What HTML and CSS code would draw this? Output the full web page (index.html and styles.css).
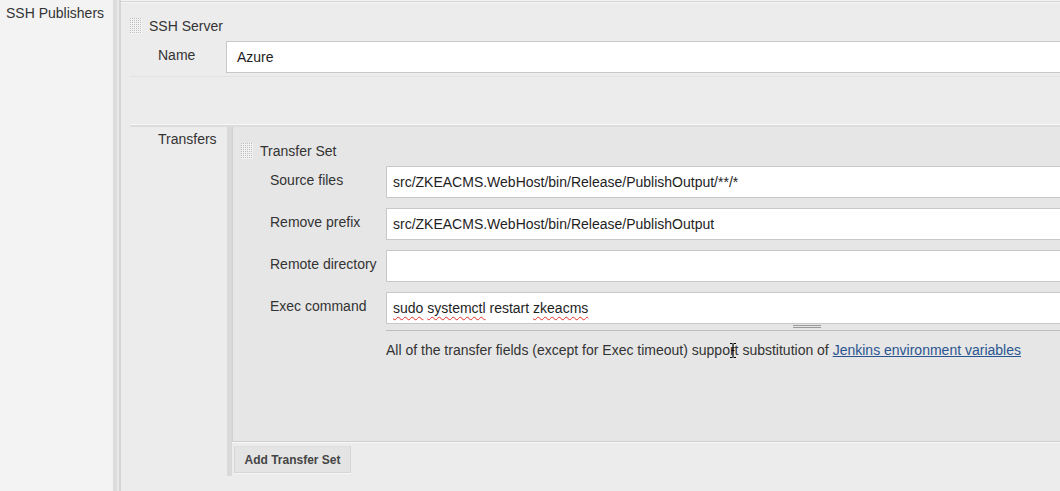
FILE: index.html
```html
<!DOCTYPE html>
<html>
<head>
<meta charset="utf-8">
<link rel="stylesheet" href="styles.css">
</head>
<body>
<div class="page">
  <div class="side">SSH Publishers</div>
  <div class="rail"></div>
  <div class="server">
    <div class="head"><span class="handle"></span><span>SSH Server</span></div>
    <div class="row name-row">
      <div class="label">Name</div>
      <div class="input">Azure</div>
    </div>
    <div class="gap"></div>
    <div class="row transfers-row">
      <div class="label">Transfers</div>
      <div class="transfers">
        <div class="set">
          <div class="head set-head"><span class="handle"></span><span>Transfer Set</span></div>
          <div class="fields">
            <div class="label">Source files</div>
            <div class="input">src/ZKEACMS.WebHost/bin/Release/PublishOutput/**/*</div>
            <div class="label">Remove prefix</div>
            <div class="input">src/ZKEACMS.WebHost/bin/Release/PublishOutput</div>
            <div class="label">Remote directory</div>
            <div class="input"></div>
            <div class="label">Exec command</div>
            <div class="textarea-wrap">
              <div class="input textarea"><span class="typo">sudo</span> <span class="typo">systemctl</span> restart <span class="typo">zkeacms</span></div>
              <div class="grip"><span class="grip-bars"></span></div>
            </div>
            <div></div>
            <div class="desc">All of the transfer fields (except for Exec timeout) support substitution of <a href="#" class="link">Jenkins environment variables</a><svg class="ibeam" width="8" height="17" viewBox="0 0 8 17"><path d="M1 1.5h2.5M4.5 1.5H7M4 2v13M1 15.5h2.5M4.5 15.5H7M2.5 8.5h3" stroke="#000" stroke-width="1.2" fill="none"/></svg></div>
          </div>
        </div>
        <button class="add-btn">Add Transfer Set</button>
      </div>
    </div>
  </div>
</div>
</body>
</html>
```
FILE: styles.css
```css
html, body {
  margin: 0;
  padding: 0;
}
body {
  background: #f3f3f3;
  font-family: "Liberation Sans", Arial, sans-serif;
  color: #333;
  overflow: hidden;
  width: 1060px;
  height: 491px;
}
.page {
  display: flex;
  height: 491px;
}
.side {
  width: 113px;
  flex: none;
  box-sizing: border-box;
  padding: 5px 0 0 6px;
  font-size: 14px;
  line-height: 16px;
  color: #333;
}
.rail {
  width: 8px;
  flex: none;
  background: linear-gradient(90deg, #dcdcdc 0 4px, #e9e9e9 4px 6px, #d5d5d5 6px 8px);
}
.server {
  flex: 1;
  margin-top: 1px;
  background: #ececec;
  border-top: 1px solid #d3d3d3;
  box-shadow: inset 0 1px 0 #f6f6f6;
  padding: 15px 0 0 9px;
  min-width: 0;
}
.head {
  display: flex;
  align-items: center;
  font-size: 14px;
  line-height: 18px;
  color: #333;
}
.handle {
  display: inline-block;
  width: 12px;
  height: 16px;
  margin-right: 7px;
  background-color: #b9b9b9;
  background-image:
    linear-gradient(90deg, transparent 1px, #f4f4f4 1px),
    linear-gradient(transparent 1px, #f4f4f4 1px);
  background-size: 2px 2px;
  opacity: 0.9;
}
.row {
  display: grid;
  grid-template-columns: 68px 1fr;
  padding-left: 28px;
}
.name-row {
  margin-top: 6px;
}
.label {
  font-size: 14px;
  line-height: 18px;
  padding-top: 5px;
  color: #333;
  white-space: nowrap;
}
.input {
  height: 32px;
  box-sizing: border-box;
  background: #fff;
  border: 1px solid #c8c8c8;
  border-right: none;
  padding: 0 10px 0 10px;
  font-size: 14px;
  line-height: 30px;
  color: #1e1e1e;
  white-space: nowrap;
  overflow: hidden;
}
.gap {
  height: 47px;
  margin-top: 3px;
  border-top: 1px solid #e2e2e2;
  border-bottom: 1px solid #f7f7f7;
}
.transfers-row {
  grid-template-columns: 69px 1fr;
  border-top: 2px solid #dcdcdc;
}
.transfers-row > .label {
  padding-top: 3px;
}
.transfers {
  border-left: 5px solid #d9d9d9;
  padding-bottom: 3px;
  min-width: 0;
}
.set {
  background: #e6e6e6;
  border-left: 1px solid #d2d2d2;
  border-bottom: 1px solid #cfcfcf;
  box-shadow: 0 1px 0 #f8f8f8;
  padding: 15px 0 82px 8px;
  height: 315px;
  box-sizing: border-box;
}
.fields {
  display: grid;
  grid-template-columns: 116px 1fr;
  row-gap: 10px;
  padding-left: 29px;
  margin-top: 6px;
}
.fields .label {
  padding-top: 5px;
}
.fields .input {
  padding-left: 6px;
}
.textarea-wrap {
  display: flex;
  flex-direction: column;
}
.grip {
  height: 6px;
  border-bottom: 1px solid #bdbdbd;
}
.grip-bars {
  display: block;
  margin-left: 407px;
  margin-top: 1px;
  width: 28px;
  height: 3px;
  border-top: 1px solid #9a9a9a;
  border-bottom: 1px solid #9a9a9a;
  box-sizing: border-box;
}
.typo {
  text-decoration: underline wavy #e0302a;
  text-decoration-thickness: 1px;
  text-underline-offset: 3px;
  text-decoration-skip-ink: none;
}
.desc {
  font-size: 14px;
  line-height: 18px;
  color: #333;
  white-space: nowrap;
  position: relative;
}
.link {
  color: #2a5590;
  text-decoration: underline;
}
.ibeam {
  position: absolute;
  left: 343px;
  top: 1px;
}
.add-btn {
  display: block;
  margin: 4px 0 0 2px;
  width: 117px;
  height: 27px;
  background: #e4e4e4;
  border: 1px solid #d6d6d6;
  border-top-color: #dedede;
  box-shadow: 0 1px 0 #f7f7f7;
  font-family: "Liberation Sans", Arial, sans-serif;
  font-weight: bold;
  font-size: 12px;
  color: #444;
  padding: 0;
}
```
